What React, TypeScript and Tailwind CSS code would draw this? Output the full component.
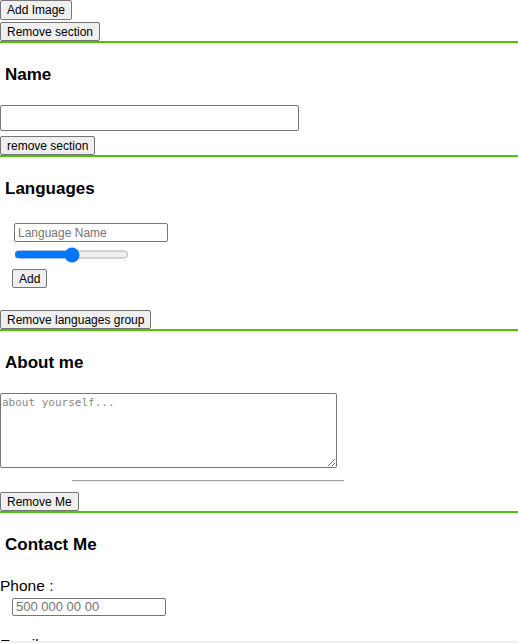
import React from 'react';

const btn =
  'h-[19px] px-[6px] bg-[#efefef] border border-[#767676] rounded-[2px] text-[12px] leading-[14px] text-black font-["Liberation_Sans",Arial,sans-serif] self-start';
const field =
  'border border-[#767676] rounded-[2px] bg-white px-[3px] text-black placeholder:text-[#757575] outline-none font-["Liberation_Sans",Arial,sans-serif]';
const heading = 'pl-[5px] mt-[21px] h-[22px] leading-[22px] text-[17px] font-bold text-black';
const section = 'flex flex-col border-b-2 border-[#4bc30b]';

export default function App() {
  return (
    <div className='min-h-[643px] bg-white font-["Liberation_Sans",Arial,sans-serif] text-black'>
      {/* image */}
      <div className={section}>
        <button className={`${btn} h-[20px]`}>Add Image</button>
        <button className={`${btn} mt-[2px]`}>Remove section</button>
      </div>

      {/* name */}
      <div className={section}>
        <h3 className={heading}>Name</h3>
        <input className={`${field} mt-[19px] w-[299px] h-[26px] text-[13px]`} />
        <button className={`${btn} mt-[5px] h-[18px]`}>remove section</button>
      </div>

      {/* languages */}
      <div className={section}>
        <h3 className={heading}>Languages</h3>
        <div className="flex flex-col pl-[12px]">
          <input
            className={`${field} ml-[2px] mt-[23px] w-[154px] h-[19px] text-[12px]`}
            placeholder="Language Name"
          />
          <div className="mt-[6px] h-[13px] flex items-center">
            <input type="range" defaultValue={51} className="ml-[2px] w-[115px] h-[13px] m-0 accent-[#0075ff]" />
          </div>
          <button className={`${btn} mt-[8px]`}>Add</button>
        </div>
        <button className={`${btn} mt-[22px]`}>Remove languages group</button>
      </div>

      {/* about */}
      <div className={section}>
        <h3 className={heading}>About me</h3>
        <textarea
          className='mt-[19px] w-[337px] h-[75px] border border-[#767676] rounded-[2px] px-[1px] py-[2px] text-[11px] leading-[14px] font-["DejaVu_Sans_Mono",monospace] placeholder:text-[#8a8a8a] outline-none'
          placeholder="about yourself..."
        />
        <hr className="mt-[12px] ml-[72px] w-[272px] border-0 border-t border-t-[#a0a0a0] border-b border-b-[#eeeeee]" />
        <button className={`${btn} mt-[10px]`}>Remove Me</button>
      </div>

      {/* contact */}
      <div className="flex flex-col">
        <h3 className={heading}>Contact Me</h3>
        <div className="mt-[21px] h-[18px] leading-[18px] text-[15.5px]">Phone :</div>
        <input
          className={`${field} ml-[12px] mt-[3px] w-[154px] h-[18px] text-[13px]`}
          placeholder="500 000 00 00"
        />
        <div className="mt-[20px] h-[18px] leading-[18px] text-[15.5px]">Email :</div>
        <input className={`${field} ml-[12px] mt-[3px] w-[154px] h-[18px] text-[13px]`} />
      </div>

      <div className="fixed bottom-0 left-0 right-0 h-[2px] bg-[#f0f0f0]" />
    </div>
  );
}
